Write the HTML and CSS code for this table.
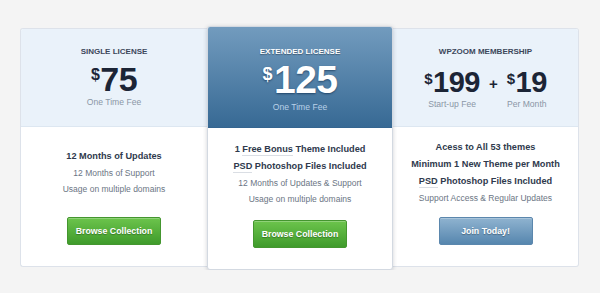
FILE: index.html
```html
<!DOCTYPE html>
<html lang="en">
<head>
<meta charset="utf-8">
<title>Pricing</title>
<link rel="stylesheet" href="styles.css">
</head>
<body>
<div class="pricing">
  <div class="plan plan-first">
    <div class="plan-head">
      <h3 class="plan-title">Single License</h3>
      <div class="price"><span class="cur">$</span>75</div>
      <div class="note">One Time Fee</div>
    </div>
    <div class="plan-body">
      <ul class="features">
        <li class="strong">12 Months of Updates</li>
        <li>12 Months of Support</li>
        <li>Usage on multiple domains</li>
      </ul>
      <a class="btn btn-green" href="#">Browse Collection</a>
    </div>
  </div>
  <div class="plan plan-featured">
    <div class="plan-head">
      <h3 class="plan-title">Extended License</h3>
      <div class="price"><span class="cur">$</span>125</div>
      <div class="note">One Time Fee</div>
    </div>
    <div class="plan-body">
      <ul class="features">
        <li class="strong">1 <span class="hint">Free Bonus</span> Theme Included</li>
        <li class="strong"><span class="hint">PSD</span> Photoshop Files Included</li>
        <li>12 Months of Updates &amp; Support</li>
        <li>Usage on multiple domains</li>
      </ul>
      <a class="btn btn-green" href="#">Browse Collection</a>
    </div>
  </div>
  <div class="plan plan-last">
    <div class="plan-head">
      <h3 class="plan-title">WPZOOM Membership</h3>
      <div class="price-row">
        <div class="price-group">
          <div class="price"><span class="cur">$</span>199</div>
          <div class="note">Start-up Fee</div>
        </div>
        <div class="plus">+</div>
        <div class="price-group">
          <div class="price"><span class="cur">$</span>19</div>
          <div class="note">Per Month</div>
        </div>
      </div>
    </div>
    <div class="plan-body">
      <ul class="features">
        <li class="strong">Acess to All 53 themes</li>
        <li class="strong">Minimum 1 New Theme per Month</li>
        <li class="strong"><span class="hint">PSD</span> Photoshop Files Included</li>
        <li>Support Access &amp; Regular Updates</li>
      </ul>
      <a class="btn btn-blue" href="#">Join Today!</a>
    </div>
  </div>
</div>
</body>
</html>
```
FILE: styles.css
```css
html, body {
  margin: 0;
  padding: 0;
}
body {
  background: #f4f4f4;
  font-family: "Liberation Sans", Arial, Helvetica, sans-serif;
  color: #2f3a4c;
}
.pricing {
  display: flex;
  align-items: flex-start;
  padding: 28px 0 0 20px;
}
.plan {
  box-sizing: border-box;
  width: 187px;
  height: 239px;
  background: #fff;
  border: 1px solid #dde2ea;
  border-radius: 3px;
  display: flex;
  flex-direction: column;
  overflow: hidden;
}
.plan-first {
  border-right: none;
  border-top-right-radius: 0;
  border-bottom-right-radius: 0;
}
.plan-last {
  width: 186px;
  border-left: none;
  border-top-left-radius: 0;
  border-bottom-left-radius: 0;
}
.plan-featured {
  position: relative;
  z-index: 2;
  width: 186px;
  height: 244px;
  margin-top: -2px;
  border-color: #d3d9e1;
  box-shadow: 0 1px 4px rgba(40, 50, 70, 0.22);
}
.plan-head {
  height: 98px;
  flex: none;
  background: #eaf2fa;
  border-bottom: 1px solid #dde7f1;
  display: flex;
  flex-direction: column;
  align-items: center;
  padding-top: 17px;
  box-sizing: border-box;
}
.plan-featured .plan-head {
  height: 101px;
  padding-top: 19px;
  background: linear-gradient(#729bbe, #376994);
  border-bottom: 1px solid #346590;
}
.plan-title {
  margin: 0;
  font-size: 8px;
  line-height: 12px;
  font-weight: bold;
  text-transform: uppercase;
  color: #3c475a;
}
.plan-featured .plan-title {
  color: #fff;
  text-shadow: 0 1px 1px rgba(0, 0, 0, 0.35);
}
.price {
  display: flex;
  align-items: flex-start;
  font-size: 34px;
  line-height: 30px;
  font-weight: bold;
  color: #1c2536;
  margin-top: 6px;
  letter-spacing: -0.5px;
}
.cur {
  font-size: 16px;
  line-height: 16px;
  margin-top: 3px;
  margin-right: 1px;
}
.plan-featured .price {
  font-size: 39px;
  line-height: 38px;
  color: #fff;
  text-shadow: 0 1px 2px rgba(0, 30, 60, 0.55);
  margin-top: 3px;
}
.plan-featured .cur {
  font-size: 18px;
  margin-top: 5px;
  margin-right: 2px;
}
.note {
  font-size: 8.6px;
  line-height: 12px;
  color: #8b97a6;
  margin-top: 2px;
}
.plan-featured .note {
  color: #b9d1e8;
  margin-top: 2px;
}
.price-row {
  display: flex;
  align-items: flex-start;
  margin-top: 9px;
}
.price-group {
  display: flex;
  flex-direction: column;
  align-items: center;
}
.price-row .price {
  font-size: 29px;
  line-height: 30px;
  margin-top: 0;
}
.price-row .cur {
  font-size: 15px;
  margin-top: 4px;
}
.price-row .note {
  margin-top: 1px;
}
.plus {
  font-size: 15px;
  font-weight: bold;
  line-height: 16px;
  color: #1c2536;
  margin: 9px 9px 0 9px;
}
.plan-body {
  flex: 1;
  display: flex;
  flex-direction: column;
  align-items: center;
  padding-bottom: 21px;
}
.features {
  flex: 1;
  list-style: none;
  margin: 0;
  padding: 0;
  display: flex;
  flex-direction: column;
  justify-content: center;
  align-items: center;
}
.features li {
  font-size: 8.5px;
  line-height: 16px;
  color: #6b7584;
  white-space: nowrap;
}
.features li.strong {
  font-size: 9.2px;
  line-height: 17px;
  font-weight: bold;
  color: #2f3a4d;
}
.hint {
  border-bottom: 1px solid #dadee4;
  padding-bottom: 1px;
}
.btn {
  box-sizing: border-box;
  width: 94px;
  height: 28px;
  display: flex;
  align-items: center;
  justify-content: center;
  border-radius: 2px;
  font-size: 8.8px;
  font-weight: bold;
  color: #fff;
  text-decoration: none;
  text-shadow: 0 1px 1px rgba(0, 0, 0, 0.3);
}
.btn-green {
  background: linear-gradient(#6cc44c, #3f9b2b);
  border: 1px solid #44962f;
  box-shadow: inset 0 1px 0 rgba(255, 255, 255, 0.25);
}
.btn-blue {
  background: linear-gradient(#8fb3d0, #5686ae);
  border: 1px solid #5b87ad;
  box-shadow: inset 0 1px 0 rgba(255, 255, 255, 0.25);
}
```
